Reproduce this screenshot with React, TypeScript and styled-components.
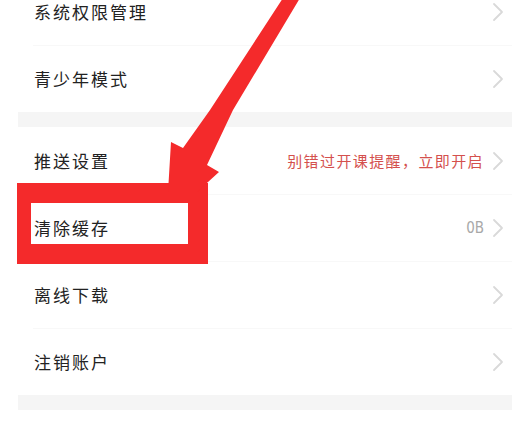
import styled, { createGlobalStyle } from "styled-components";

type RowType = {
  label: string;
  hint?: string;
  hintType?: "alert" | "muted";
};

const groups: RowType[][] = [
  [{ label: "系统权限管理" }, { label: "青少年模式" }],
  [
    { label: "推送设置", hint: "别错过开课提醒，立即开启", hintType: "alert" },
    { label: "清除缓存", hint: "0B", hintType: "muted" },
    { label: "离线下载" },
    { label: "注销账户" },
  ],
];

const Chevron = () => (
  <ChevronSvg viewBox="0 0 12 20" width="12" height="20">
    <path d="M2 2 L10 10 L2 18" fill="none" stroke="#d9d9d9" strokeWidth="1.8" strokeLinecap="round" strokeLinejoin="round" />
  </ChevronSvg>
);

const App = () => {
  return (
    <>
      <GlobalStyle />
      <Page>
        <List>
          {groups.map((group, gi) => (
            <Group key={gi}>
              {group.map((row) => (
                <Row key={row.label}>
                  <Label>{row.label}</Label>
                  <RowEnd>
                    {row.hint && <Hint $type={row.hintType}>{row.hint}</Hint>}
                    <Chevron />
                  </RowEnd>
                </Row>
              ))}
            </Group>
          ))}
        </List>

        {/* red annotation drawn over the screenshot */}
        <MarkBox />
        <Arrow viewBox="0 0 512 422" width="512" height="422">
          <polygon
            points="283,-2 300,-2 233,110 207,165 219,172 197,192 168,192 171,142 183,148 210,110"
            fill="#f42a2b"
          />
        </Arrow>
      </Page>
    </>
  );
};

const GlobalStyle = createGlobalStyle`
  html, body {
    margin: 0;
    padding: 0;
    background: #ffffff;
  }
  body {
    font-family: "Noto Sans CJK SC", "Noto Sans", sans-serif;
  }
`;

const Page = styled.div`
  position: relative;
  width: 512px;
  height: 422px;
  overflow: hidden;
  background: #ffffff;
`;

const List = styled.div`
  margin: -22px 0 0 18px;
  display: flex;
  flex-direction: column;
`;

const Group = styled.div`
  display: flex;
  flex-direction: column;
  border-bottom: 15px solid #f5f5f5;
`;

const Row = styled.div`
  height: 67px;
  box-sizing: border-box;
  display: flex;
  align-items: center;
  justify-content: space-between;
  padding: 0 8px 0 16px;
  background: #ffffff;
  position: relative;

  & + &::before {
    content: "";
    position: absolute;
    top: 0;
    left: 15px;
    right: 0;
    height: 1px;
    background: #f8f8f8;
  }
`;

const Label = styled.span`
  font-size: 17px;
  line-height: 20px;
  letter-spacing: 2px;
  color: #222222;
`;

const RowEnd = styled.div`
  display: flex;
  align-items: center;
  gap: 8px;
`;

const Hint = styled.span<{ $type?: "alert" | "muted" }>`
  font-size: 15px;
  line-height: 20px;
  letter-spacing: ${({ $type }) => ($type === "alert" ? "1.4px" : "0")};
  color: ${({ $type }) => ($type === "alert" ? "#d4504d" : "#a8a8a8")};
  font-family: ${({ $type }) =>
    $type === "alert" ? `"Noto Sans CJK SC", sans-serif` : `"DejaVu Sans Condensed", "DejaVu Sans", sans-serif`};
`;

const ChevronSvg = styled.svg`
  display: block;
`;

const MarkBox = styled.div`
  position: absolute;
  left: 17px;
  top: 183px;
  width: 191px;
  height: 81px;
  box-sizing: border-box;
  border-style: solid;
  border-color: #f42a2b;
  border-width: 20px 20px 20px 14px;
`;

const Arrow = styled.svg`
  position: absolute;
  left: 0;
  top: 0;
  pointer-events: none;
`;

export default App;
